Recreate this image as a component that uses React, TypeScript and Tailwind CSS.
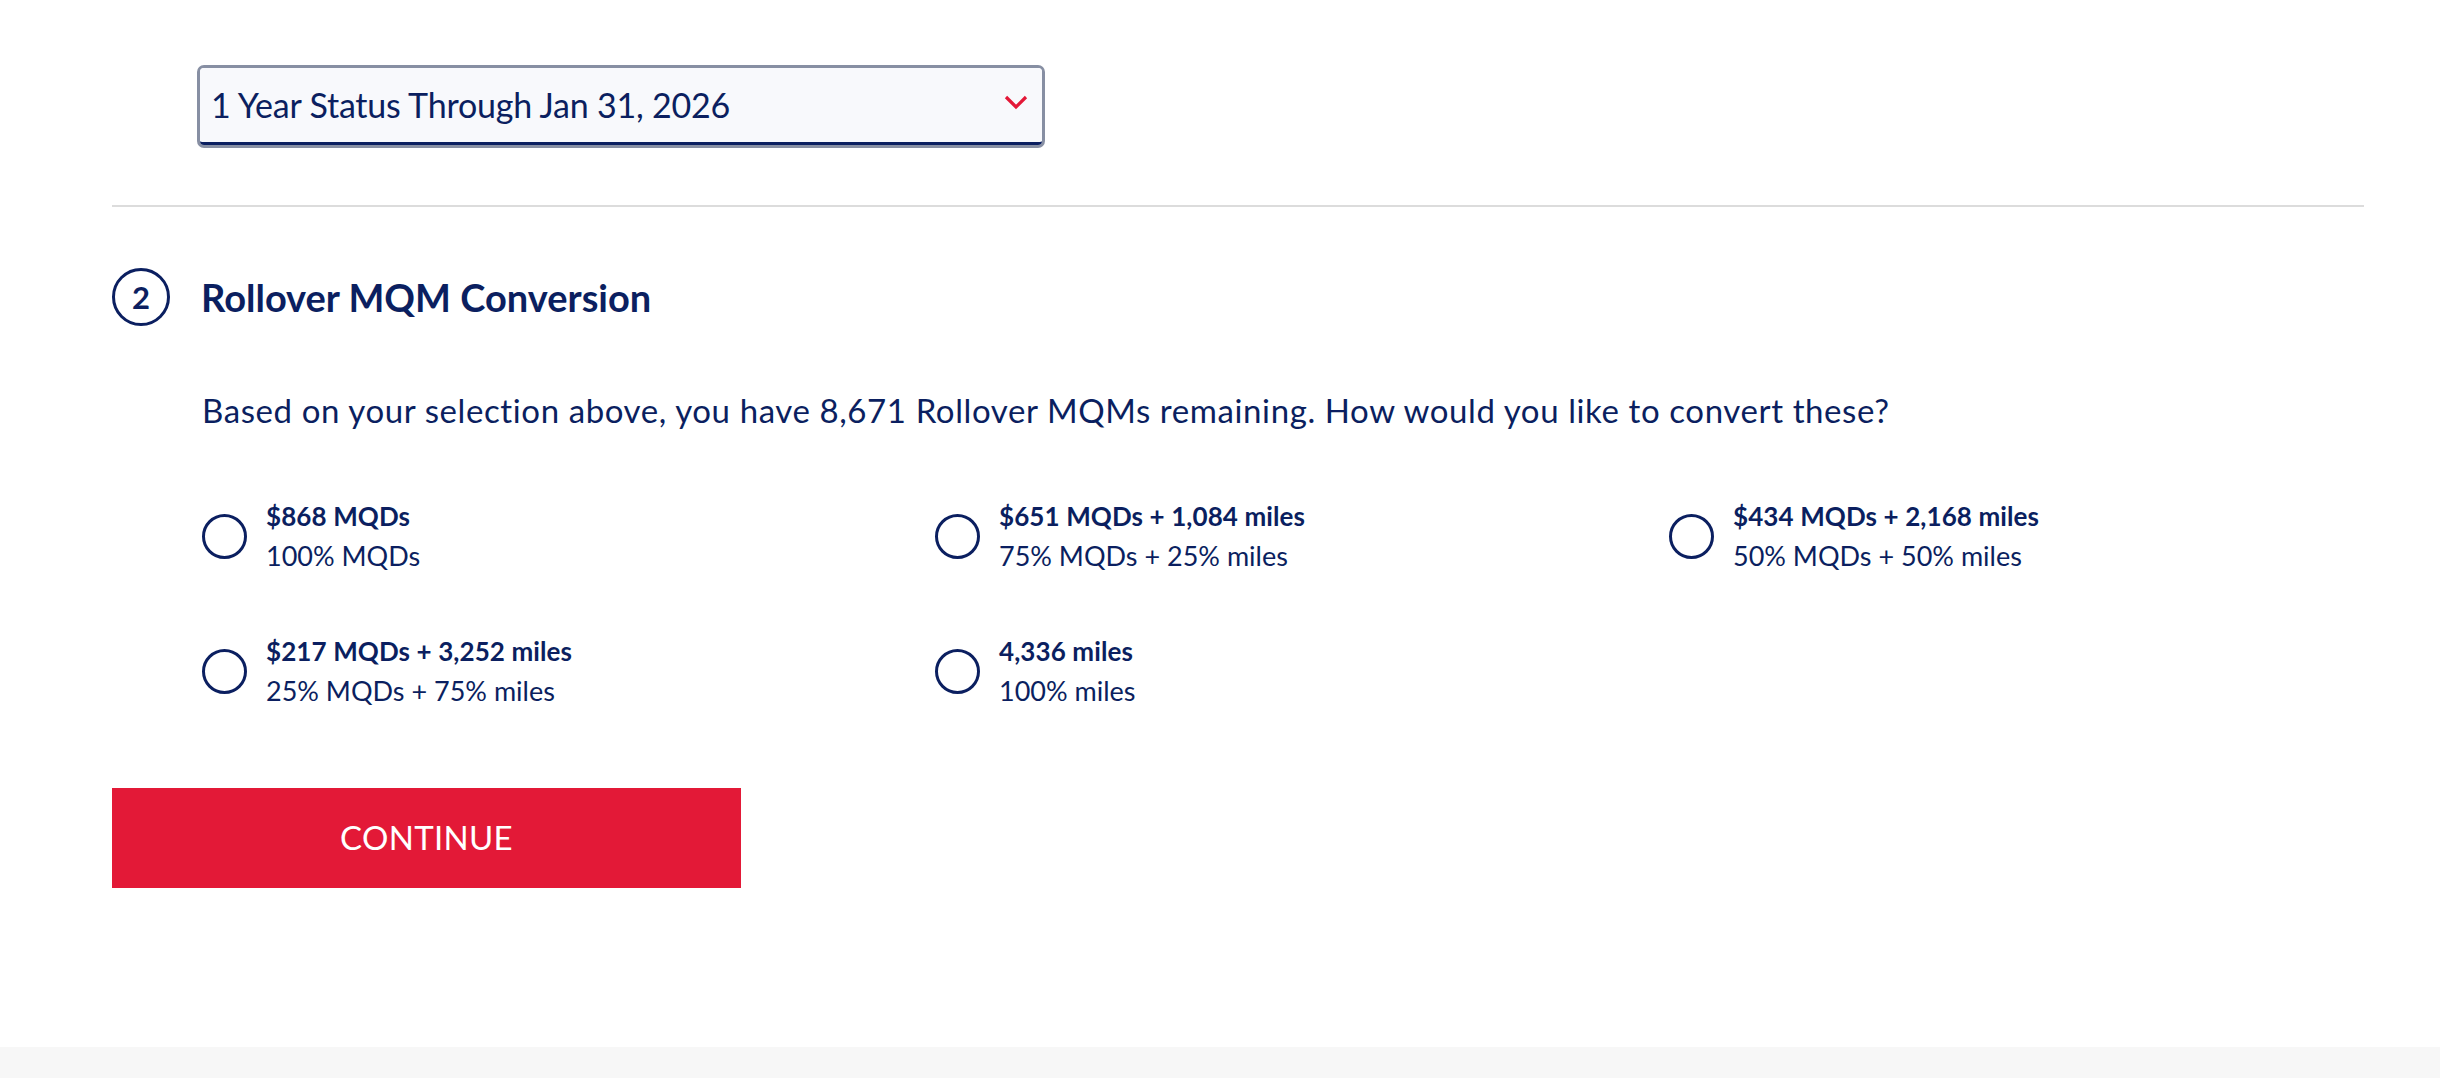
import React from "react";

const NAVY = "text-[#0b1f60]";

const options = [
  { title: "$868 MQDs", sub: "100% MQDs" },
  { title: "$651 MQDs + 1,084 miles", sub: "75% MQDs + 25% miles" },
  { title: "$434 MQDs + 2,168 miles", sub: "50% MQDs + 50% miles" },
  { title: "$217 MQDs + 3,252 miles", sub: "25% MQDs + 75% miles" },
  { title: "4,336 miles", sub: "100% miles" },
];

function Radio() {
  return (
    <span className="w-[45px] h-[45px] shrink-0 rounded-full border-[3px] border-[#0b1f60] bg-white" />
  );
}

export default function App() {
  return (
    <div
      className={`min-h-screen flex flex-col bg-white ${NAVY}`}
      style={{ fontFamily: "Lato, 'Noto Sans', sans-serif" }}
    >
      <div className="h-[1047px] px-[112px] pt-[65px]">
        {/* Select */}
        <div className="ml-[85px] w-[848px] h-[83px] rounded-[7px] border-[3px] border-[#878fa3]">
          <div className="h-full w-full rounded-[4px] bg-[#f8f9fc] border-b-[3px] border-[#0b1f60] flex items-center justify-between pl-[11px] pr-[14px]">
            <span className="text-[34px] leading-none tracking-[-0.2px]">
              1 Year Status Through Jan 31, 2026
            </span>
            <svg width="24" height="16" viewBox="0 0 24 16" className="mt-[-6px]">
              <path d="M2 3 L12 13 L22 3" fill="none" stroke="#e31837" strokeWidth="3.2" />
            </svg>
          </div>
        </div>

        {/* Divider */}
        <div className="mt-[57px] h-[2px] w-[2252px] bg-[#dcdcdc]" />

        {/* Heading */}
        <div className="mt-[61px] flex items-center">
          <div className="w-[58px] h-[58px] rounded-full border-[3px] border-[#0b1f60] flex items-center justify-center font-bold text-[31px] leading-none">
            2
          </div>
          <h2 className="ml-[31px] text-[38px] font-bold leading-none">
            Rollover MQM Conversion
          </h2>
        </div>

        {/* Paragraph */}
        <p className="mt-[64px] ml-[90px] text-[33px] tracking-[0.6px] leading-[40px]">
          Based on your selection above, you have 8,671 Rollover MQMs remaining. How would you like to convert these?
        </p>

        {/* Options */}
        <div className="mt-[66px] ml-[90px] grid grid-cols-[733px_734px_1fr] gap-y-[55px]">
          {options.map((o) => (
            <label key={o.title} className="flex items-center gap-[19px] cursor-pointer">
              <Radio />
              <div className="flex flex-col">
                <span className="text-[26px] font-bold leading-[40px] tracking-[0.1px]">{o.title}</span>
                <span className="text-[27px] leading-[40px]">{o.sub}</span>
              </div>
            </label>
          ))}
        </div>

        {/* Button */}
        <button className="mt-[77px] w-[629px] h-[100px] bg-[#e31937] text-white text-[33px] tracking-[0.3px] flex items-center justify-center">
          CONTINUE
        </button>
      </div>
      <div className="flex-1 bg-[#f7f7f7]" />
    </div>
  );
}
